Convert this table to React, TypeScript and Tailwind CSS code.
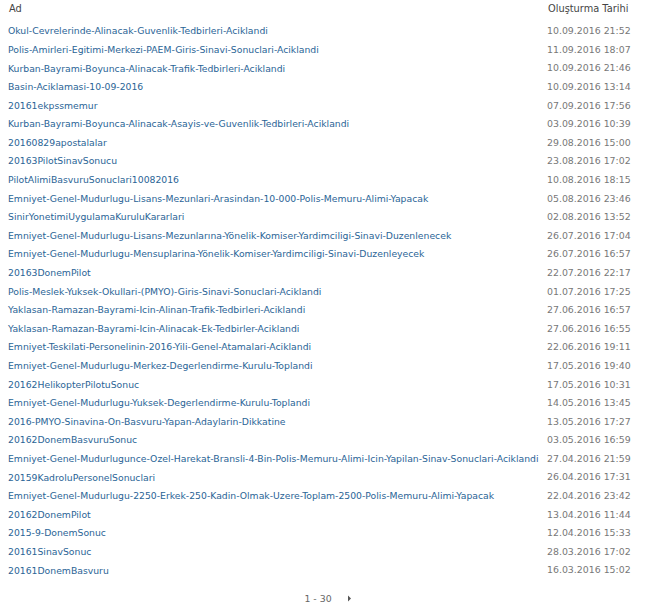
const rows: [string, string][] = [
  ['Okul-Cevrelerinde-Alinacak-Guvenlik-Tedbirleri-Aciklandi', '10.09.2016 21:52'],
  ['Polis-Amirleri-Egitimi-Merkezi-PAEM-Giris-Sinavi-Sonuclari-Aciklandi', '11.09.2016 18:07'],
  ['Kurban-Bayrami-Boyunca-Alinacak-Trafik-Tedbirleri-Aciklandi', '10.09.2016 21:46'],
  ['Basin-Aciklamasi-10-09-2016', '10.09.2016 13:14'],
  ['20161ekpssmemur', '07.09.2016 17:56'],
  ['Kurban-Bayrami-Boyunca-Alinacak-Asayis-ve-Guvenlik-Tedbirleri-Aciklandi', '03.09.2016 10:39'],
  ['20160829apostalalar', '29.08.2016 15:00'],
  ['20163PilotSinavSonucu', '23.08.2016 17:02'],
  ['PilotAlimiBasvuruSonuclari10082016', '10.08.2016 18:15'],
  ['Emniyet-Genel-Mudurlugu-Lisans-Mezunlari-Arasindan-10-000-Polis-Memuru-Alimi-Yapacak', '05.08.2016 23:46'],
  ['SinirYonetimiUygulamaKuruluKararlari', '02.08.2016 13:52'],
  ['Emniyet-Genel-Mudurlugu-Lisans-Mezunlarına-Yönelik-Komiser-Yardimciligi-Sinavi-Duzenlenecek', '26.07.2016 17:04'],
  ['Emniyet-Genel-Mudurlugu-Mensuplarina-Yönelik-Komiser-Yardimciligi-Sinavi-Duzenleyecek', '26.07.2016 16:57'],
  ['20163DonemPilot', '22.07.2016 22:17'],
  ['Polis-Meslek-Yuksek-Okullari-(PMYO)-Giris-Sinavi-Sonuclari-Aciklandi', '01.07.2016 17:25'],
  ['Yaklasan-Ramazan-Bayrami-Icin-Alinan-Trafik-Tedbirleri-Aciklandi', '27.06.2016 16:57'],
  ['Yaklasan-Ramazan-Bayrami-Icin-Alinacak-Ek-Tedbirler-Aciklandi', '27.06.2016 16:55'],
  ['Emniyet-Teskilati-Personelinin-2016-Yili-Genel-Atamalari-Aciklandi', '22.06.2016 19:11'],
  ['Emniyet-Genel-Mudurlugu-Merkez-Degerlendirme-Kurulu-Toplandi', '17.05.2016 19:40'],
  ['20162HelikopterPilotuSonuc', '17.05.2016 10:31'],
  ['Emniyet-Genel-Mudurlugu-Yuksek-Degerlendirme-Kurulu-Toplandi', '14.05.2016 13:45'],
  ['2016-PMYO-Sinavina-On-Basvuru-Yapan-Adaylarin-Dikkatine', '13.05.2016 17:27'],
  ['20162DonemBasvuruSonuc', '03.05.2016 16:59'],
  ['Emniyet-Genel-Mudurlugunce-Ozel-Harekat-Bransli-4-Bin-Polis-Memuru-Alimi-Icin-Yapilan-Sinav-Sonuclari-Aciklandi', '27.04.2016 21:59'],
  ['20159KadroluPersonelSonuclari', '26.04.2016 17:31'],
  ['Emniyet-Genel-Mudurlugu-2250-Erkek-250-Kadin-Olmak-Uzere-Toplam-2500-Polis-Memuru-Alimi-Yapacak', '22.04.2016 23:42'],
  ['20162DonemPilot', '13.04.2016 11:44'],
  ['2015-9-DonemSonuc', '12.04.2016 15:33'],
  ['20161SinavSonuc', '28.03.2016 17:02'],
  ['20161DonemBasvuru', '16.03.2016 15:02'],
]

export default function App() {
  return (
    <div className="w-[648px] h-[608px] bg-white overflow-hidden text-[9.4px]" style={{ fontFamily: '"DejaVu Sans", Verdana, sans-serif' }}>
      <div className="grid grid-cols-[547px_1fr] h-[19px] items-center text-[#444] text-[9.8px]">
        <div className="pl-[9px]">Ad</div>
        <div className="pl-[1px]">Oluşturma Tarihi</div>
      </div>
      <div className="pt-[3px]">
        {rows.map(([name, date]) => (
          <div key={name} className="grid grid-cols-[547px_1fr] h-[18.6px] items-center">
            <div className="pl-[8px] text-[#2a6496] text-[9.28px] whitespace-nowrap overflow-hidden">{name}</div>
            <div className="text-[#777] whitespace-nowrap">{date}</div>
          </div>
        ))}
      </div>
      <div className="mt-[10px] h-[18px] flex items-center justify-center gap-[15px] text-[#666] pl-[8px]">
        <span>1 - 30</span>
        <svg width="5" height="7" viewBox="0 0 5 7">
          <path d="M1 0.5 L4 3.5 L1 6.5 Z" fill="#555" />
        </svg>
      </div>
    </div>
  )
}
